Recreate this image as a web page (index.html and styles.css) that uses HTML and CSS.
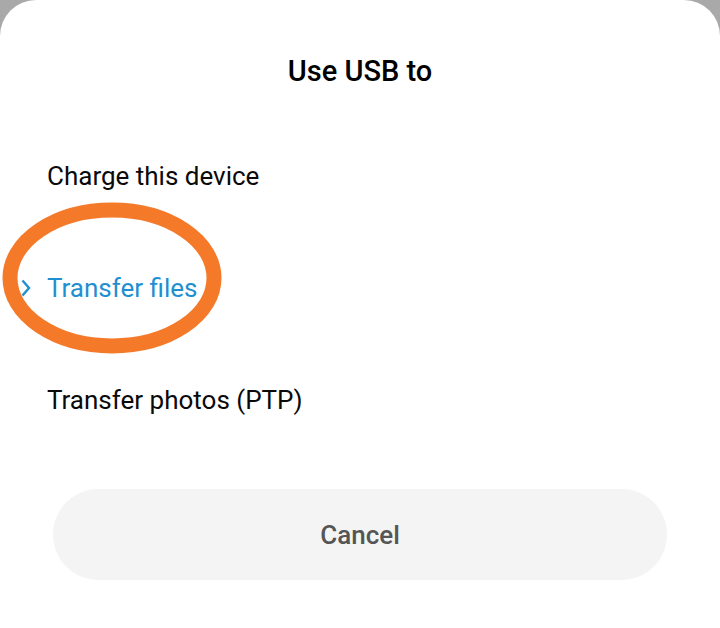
FILE: index.html
```html
<!DOCTYPE html>
<html lang="en">
<head>
<meta charset="UTF-8">
<meta name="viewport" content="width=device-width, initial-scale=1.0">
<title>Use USB to</title>
<link rel="stylesheet" href="styles.css">
</head>
<body>
<div class="sheet">
<h1 class="titulo">Use USB to</h1>

<ul class="opciones">
<li class="opcion"><span class="marca"></span>Charge this device</li>
<li class="opcion activa">
<span class="marca">
<svg width="10" height="18" viewBox="0 0 10 18"><path d="M1.5 1.5 L8 9 L1.5 16.5" fill="none" stroke="#1f8fd0" stroke-width="2.4"/></svg>
</span>Transfer files</li>
<li class="opcion"><span class="marca"></span>Transfer photos (PTP)</li>
</ul>

<div class="acciones">
<button class="cancelar">Cancel</button>
</div>

<!-- circulo naranja dibujado encima -->
<svg class="circulo" width="224" height="152" viewBox="0 0 224 152">
<ellipse cx="112" cy="76" rx="102" ry="68" fill="none" stroke="#f47a2a" stroke-width="15"/>
</svg>
</div>
</body>
</html>
```

FILE: styles.css
```css
body {
margin: 0;
background-color: #a9a9a9;
font-family: Roboto, "Liberation Sans", sans-serif;
}

.sheet {
position: relative;
height: 628px;
background-color: #fff;
border-radius: 36px 36px 0 0;
display: flex;
flex-direction: column;
}

.titulo {
margin: 0;
padding-top: 51px;
font-size: 29px;
line-height: 40px;
font-weight: 500;
text-align: center;
color: #000;
}

.opciones {
list-style-type: none;
margin: 29px 0 0 0;
padding: 0;
}

.opcion {
display: flex;
align-items: center;
height: 112px;
padding-left: 21px;
font-size: 26px;
color: #0a0a0a;
}

.marca {
width: 26px;
display: flex;
align-items: center;
}

.activa {
color: #1f8fd0;
}

.acciones {
margin-top: 33px;
padding: 0 53px;
}

.cancelar {
width: 100%;
height: 91px;
border: none;
border-radius: 46px;
background-color: #f4f4f4;
font-family: inherit;
font-size: 26px;
font-weight: 500;
color: #555;
}

.circulo {
position: absolute;
left: 0;
top: 202px;
}
```
